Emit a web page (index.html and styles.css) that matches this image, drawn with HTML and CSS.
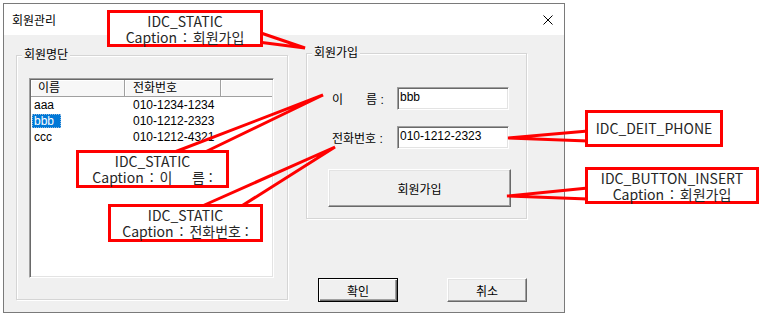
FILE: index.html
```html
<!DOCTYPE html>
<html lang="ko">
<head>
    <meta charset="UTF-8">
    <title>회원관리</title>
    <link rel="stylesheet" href="styles.css">
</head>
<body>
    <div class="dialog">
        <div class="titlebar">
            <span class="title">회원관리</span>
            <svg class="close" width="10" height="10" viewBox="0 0 10 10">
                <path d="M0.5 0.5 L9.5 9.5 M9.5 0.5 L0.5 9.5" stroke="#000" stroke-width="1" fill="none"/>
            </svg>
        </div>
        <div class="client">
            <div class="group group-list">
                <div class="group-title">회원명단</div>
                <div class="listview">
                    <div class="lv-header">
                        <div class="hd c1">이름</div>
                        <div class="hd c2">전화번호</div>
                        <div class="hd c3"></div>
                    </div>
                    <div class="lv-row">
                        <div class="c1"><span class="name">aaa</span></div>
                        <div class="c2">010-1234-1234</div>
                    </div>
                    <div class="lv-row">
                        <div class="c1"><span class="name selected">bbb</span></div>
                        <div class="c2">010-1212-2323</div>
                    </div>
                    <div class="lv-row">
                        <div class="c1"><span class="name">ccc</span></div>
                        <div class="c2">010-1212-4321</div>
                    </div>
                </div>
            </div>
            <div class="right-col">
                <div class="group group-form">
                    <div class="group-title">회원가입</div>
                    <div class="form">
                        <div class="label"><span class="gap">이</span>름 :</div>
                        <div class="edit">bbb</div>
                        <div class="label">전화번호 :</div>
                        <div class="edit">010-1212-2323</div>
                    </div>
                    <button class="btn btn-insert">회원가입</button>
                </div>
                <div class="actions">
                    <button class="btn btn-default">확인</button>
                    <button class="btn">취소</button>
                </div>
            </div>
        </div>
    </div>

    <!-- annotation callouts -->
    <svg class="pointers" width="767" height="318" viewBox="0 0 767 318">
        <g stroke="#ff0000" stroke-width="3" fill="none" stroke-linejoin="miter">
            <polyline points="258,32 305,48 258,42"/>
            <polyline points="172,153 323,95 203,153"/>
            <polyline points="200,207 335,147 240,207"/>
            <polyline points="588,131 508,138 588,141"/>
            <polyline points="588,188 507,196 588,199"/>
        </g>
    </svg>
    <div class="note note-a">IDC_STATIC<br>Caption <span class="colon">:</span> 회원가입</div>
    <div class="note note-b">IDC_STATIC<br>Caption <span class="colon">:</span> 이&nbsp;&nbsp;&nbsp;&nbsp;&nbsp;름 :</div>
    <div class="note note-c">IDC_STATIC<br>Caption <span class="colon">:</span> 전화번호 :</div>
    <div class="note note-d">IDC_DEIT_PHONE</div>
    <div class="note note-e">IDC_BUTTON_INSERT<br>Caption <span class="colon">:</span> 회원가입</div>
</body>
</html>
```

FILE: styles.css
```css
body {
    margin: 0;
    background-color: #ffffff;
    font-family: "Liberation Sans", "Noto Sans CJK KR", sans-serif;
    font-size: 12px;
    color: #000;
    position: relative;
    width: 767px;
    height: 318px;
    overflow: hidden;
}
.dialog {
    box-sizing: border-box;
    margin: 3px 0 0 3px;
    width: 562px;
    height: 310px;
    background-color: #f0f0f0;
    border: 1px solid #7a7a7a;
    display: flex;
    flex-direction: column;
}
.titlebar {
    height: 31px;
    background-color: #ffffff;
    display: flex;
    align-items: center;
    justify-content: space-between;
    padding: 0 10px 0 8px;
}
.title {
    font-size: 12px;
    padding-bottom: 1px;
}
.close {
    display: block;
    margin-right: 1px;
}
.client {
    flex: 1;
    display: flex;
    gap: 18px;
    padding: 18px 0 0 12px;
}
.group {
    box-sizing: border-box;
    border: 1px solid #d5d5d5;
    box-shadow: inset 1px 1px #ffffff, 1px 1px #ffffff;
    display: flex;
    flex-direction: column;
}
.group-title {
    width: fit-content;
    margin: -9px 0 0 5px;
    padding: 0 2px;
    height: 16px;
    line-height: 16px;
    background-color: #f0f0f0;
}
.group-list {
    margin-top: 2px;
    width: 272px;
    height: 245px;
}
.listview {
    box-sizing: border-box;
    margin: 15px 0 0 12px;
    width: 245px;
    height: 200px;
    background-color: #ffffff;
    border-style: solid;
    border-width: 1px;
    border-color: #a0a0a0 #ffffff #ffffff #a0a0a0;
    box-shadow: inset 1px 1px #696969, inset -1px -1px #e3e3e3;
    padding: 1px;
}
.lv-header {
    display: flex;
    height: 17px;
}
.hd {
    box-sizing: border-box;
    height: 17px;
    line-height: 16px;
    background-color: #f7f7f7;
    border-right: 1px solid #a0a0a0;
    border-bottom: 1px solid #a0a0a0;
    box-shadow: inset 1px 1px #ffffff;
}
.hd.c1 {
    padding-left: 7px;
}
.hd.c2 {
    padding-left: 8px;
}
.c1 {
    width: 94px;
}
.c2 {
    width: 96px;
    padding-left: 7px;
    box-sizing: border-box;
}
.c3 {
    flex: 1;
    border-right: none;
}
.lv-row {
    display: flex;
    height: 16px;
    align-items: center;
}
.lv-row .c2 {
    padding-left: 8px;
}
.name {
    display: inline-block;
    margin-left: 1px;
    padding: 0 2px;
    line-height: 14px;
}
.selected {
    background-color: #0078d7;
    color: #ffffff;
    outline: 1px dotted #8fb8e0;
    outline-offset: -1px;
    padding-right: 7px;
}
.right-col {
    display: flex;
    flex-direction: column;
    width: 221px;
}
.group-form {
    width: 221px;
    height: 166px;
}
.form {
    display: grid;
    grid-template-columns: 65px 112px;
    row-gap: 16px;
    margin: 26px 0 0 25px;
    align-items: center;
}
.label {
    white-space: nowrap;
}
.gap {
    margin-right: 23px;
}
.edit {
    box-sizing: border-box;
    height: 23px;
    line-height: 19px;
    padding-left: 2px;
    background-color: #ffffff;
    border-style: solid;
    border-width: 1px;
    border-color: #a0a0a0 #ffffff #ffffff #a0a0a0;
    box-shadow: inset 1px 1px #696969, inset -1px -1px #e3e3e3;
}
.btn {
    box-sizing: border-box;
    font-family: "Liberation Sans", "Noto Sans CJK KR", sans-serif;
    font-size: 12px;
    color: #000;
    background-color: #f0f0f0;
    border-style: solid;
    border-width: 1px;
    border-color: #ffffff #696969 #696969 #ffffff;
    box-shadow: inset -1px -1px #a0a0a0, inset 1px 1px #e3e3e3;
    padding: 0;
    cursor: pointer;
}
.btn-insert {
    margin: 20px 0 0 21px;
    width: 183px;
    height: 38px;
}
.actions {
    display: flex;
    gap: 49px;
    margin-top: 59px;
    padding-left: 12px;
}
.actions .btn {
    width: 80px;
    height: 24px;
}
.btn-default {
    border-color: #000;
    box-shadow: inset 1px 1px #ffffff, inset -1px -1px #696969, inset -2px -2px #a0a0a0;
}

/* annotation layer */
.pointers {
    position: absolute;
    left: 0;
    top: 0;
}
.note {
    position: absolute;
    box-sizing: border-box;
    border: 3px solid #ff0000;
    background-color: #ffffff;
    font-family: "Noto Sans CJK KR", "Liberation Sans", sans-serif;
    font-size: 14px;
    line-height: 16px;
    color: #262626;
    text-align: center;
    white-space: nowrap;
}
.colon {
    margin: 0 2px;
}
.note-a {
    left: 107px;
    top: 10px;
    width: 156px;
    height: 37px;
}
.note-b {
    left: 76px;
    top: 150px;
    width: 153px;
    height: 38px;
}
.note-c {
    left: 108px;
    top: 204px;
    width: 155px;
    height: 38px;
}
.note-d {
    left: 585px;
    top: 110px;
    width: 138px;
    height: 37px;
    line-height: 30px;
}
.note-e {
    left: 585px;
    top: 167px;
    width: 174px;
    height: 37px;
}
```
